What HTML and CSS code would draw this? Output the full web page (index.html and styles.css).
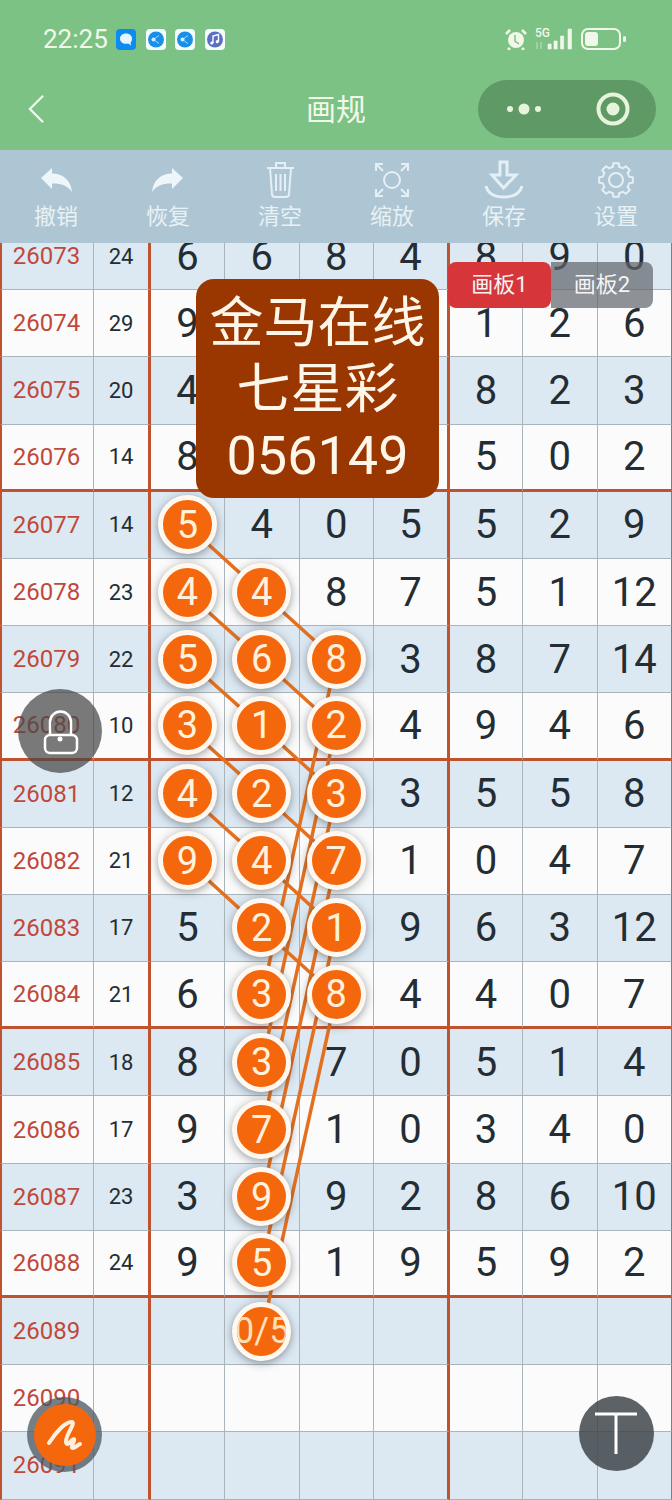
FILE: index.html
```html
<!DOCTYPE html>
<html lang="zh-CN">
<head>
  <meta charset="UTF-8">
  <meta name="viewport" content="width=device-width, initial-scale=1.0">
  <title>画规</title>
  <link rel="stylesheet" href="styles.css">
</head>
<body>
  <header class="top">
    <div class="status">
      <span class="time">22:25</span>
      <div class="notes">
        <svg viewBox="0 0 20 21"><rect width="20" height="21" rx="4" fill="#0a8cf0"/><path d="M10 4.5c-3.6 0-6 2.2-6 5.2 0 2.900 2.400 5 6 5 .8 0 1.500-.1 2.200-.3l2.800 2-.4-3c1-1 1.400-2.200 1.400-3.700 0-3-2.400-5.200-6-5.200z" fill="#e6f6ff"/></svg>
        <svg viewBox="0 0 20 21"><rect width="20" height="21" rx="4" fill="#f6fbff"/><circle cx="10" cy="10.500" r="8" fill="#1a8fe8"/><path d="M13 6.500 7.500 10.500l5.500 4" fill="none" stroke="#9fdcff" stroke-width="1"/><circle cx="7.500" cy="10.500" r="2" fill="#cdeeff"/></svg>
        <svg viewBox="0 0 20 21"><rect width="20" height="21" rx="4" fill="#f6fbff"/><circle cx="10" cy="10.500" r="8" fill="#1a8fe8"/><path d="M13 6.500 7.500 10.500l5.500 4" fill="none" stroke="#9fdcff" stroke-width="1"/><circle cx="7.500" cy="10.500" r="2" fill="#cdeeff"/></svg>
        <svg viewBox="0 0 20 21"><rect width="20" height="21" rx="4" fill="#f6fbff"/><circle cx="10" cy="10.500" r="8" fill="#5a6fc4"/><path d="M8 14V7l5.500-1.500v7" fill="none" stroke="#fff" stroke-width="1.400"/><circle cx="6.800" cy="14" r="1.600" fill="#fff"/><circle cx="12.300" cy="12.700" r="1.600" fill="#fff"/></svg>
      </div>
      <div class="sys">
        <svg class="alarm" viewBox="0 0 22 22"><circle cx="11" cy="12" r="8" fill="#f1f8ea"/><path d="M1 6 5 2M21 6l-4-4M5 20l-2 2M17 20l2 2" stroke="#f1f8ea" stroke-width="2.600"/><path d="M10 7v6l4 3" fill="none" stroke="#7cc284" stroke-width="1.500"/></svg>
        <span class="five-g">5G</span>
        <svg class="bars" viewBox="0 0 38 22"><path d="M2 14v7M6 14v7M13 16h3.200v5H13zM19 13h3.200v8H19zM25.500 8h3.200v13h-3.200zM33 1h3.500v20H33z" fill="#f1f8ea" stroke="#f1f8ea" stroke-width=".6"/></svg>
        <svg class="battery" viewBox="0 0 46 22"><rect x="1" y="1" width="38" height="20" rx="6" fill="none" stroke="#f1f8ea" stroke-width="2"/><rect x="4" y="4" width="13" height="14" rx="3" fill="#f1f8ea"/><rect x="42" y="8" width="3" height="6" rx="1.500" fill="#f1f8ea"/></svg>
      </div>
    </div>
    <nav class="nav">
      <svg class="back" viewBox="0 0 18 30"><path d="M16 1 2 15l14 14" fill="none" stroke="#f1f8ea" stroke-width="2.400"/></svg>
      <h1>画规</h1>
      <div class="capsule">
        <svg class="more" viewBox="0 0 36 12"><circle cx="4" cy="6" r="3" fill="#e8f3dc"/><circle cx="18" cy="6" r="5.500" fill="#e8f3dc"/><circle cx="32" cy="6" r="3" fill="#e8f3dc"/></svg>
        <svg class="target" viewBox="0 0 34 34"><circle cx="17" cy="17" r="14.500" fill="none" stroke="#e8f3dc" stroke-width="4"/><circle cx="17" cy="17" r="6.500" fill="#e8f3dc"/></svg>
      </div>
    </nav>
  </header>

  <div class="tools">
    <div class="tool">
      <svg viewBox="0 0 40 40"><path class="solid" d="M5 18 16 8v5.500c11 0 19 7 20 18.500-4-6-10-8.500-20-8.500V29z"/></svg>
      <span>撤销</span>
    </div>
    <div class="tool">
      <svg viewBox="0 0 40 40"><path class="solid" d="M35 18 24 8v5.500C13 13.500 5 20.500 4 32c4-6 10-8.500 20-8.500V29z"/></svg>
      <span>恢复</span>
    </div>
    <div class="tool">
      <svg viewBox="0 0 40 40"><path class="line" d="M7 8h27M16 8V3h9v5M10 8l2 26c0 1.500 1 3 3 3h11c2 0 3-1.500 3-3l2-26M16 14v17M20.500 14v17M25 14v17"/></svg>
      <span>清空</span>
    </div>
    <div class="tool">
      <svg viewBox="0 0 40 40"><circle class="line" cx="20" cy="20" r="8"/><path class="line" d="M4 11V4h7M5 5l6 6M36 11V4h-7M35 5l-6 6M4 29v7h7M5 35l6-6M36 29v7h-7M35 35l-6-6"/></svg>
      <span>缩放</span>
    </div>
    <div class="tool">
      <svg viewBox="0 0 40 40"><path class="line wide" d="M16 2h7v13h9L19.500 28 8 15h8zM2 26c2 8 8 11 18 11s16-3 18-11"/></svg>
      <span>保存</span>
    </div>
    <div class="tool">
      <svg viewBox="0 0 40 40">
        <g transform="translate(20 20)">
          <path id="tooth" class="line" d="M-5.200-12.500-3.300-13.100-2.700-16.800H2.700L3.300-13.100 5.200-12.500"/>
          <use href="#tooth" transform="rotate(45)"/>
          <use href="#tooth" transform="rotate(90)"/>
          <use href="#tooth" transform="rotate(135)"/>
          <use href="#tooth" transform="rotate(180)"/>
          <use href="#tooth" transform="rotate(225)"/>
          <use href="#tooth" transform="rotate(270)"/>
          <use href="#tooth" transform="rotate(315)"/>
          <circle class="line" r="7"/>
        </g>
      </svg>
      <span>设置</span>
    </div>
  </div>

  <main class="board">
    <div class="sheet">
      <div class="row"><div class="no">26073</div><div class="sum">24</div><div>6</div><div>6</div><div>8</div><div>4</div><div>8</div><div>9</div><div>0</div></div>
      <div class="row"><div class="no">26074</div><div class="sum">29</div><div>9</div><div></div><div></div><div></div><div>1</div><div>2</div><div>6</div></div>
      <div class="row"><div class="no">26075</div><div class="sum">20</div><div>4</div><div></div><div></div><div></div><div>8</div><div>2</div><div>3</div></div>
      <div class="row end"><div class="no">26076</div><div class="sum">14</div><div>8</div><div></div><div></div><div></div><div>5</div><div>0</div><div>2</div></div>
      <div class="row"><div class="no">26077</div><div class="sum">14</div><div><span class="ball">5</span></div><div>4</div><div>0</div><div>5</div><div>5</div><div>2</div><div>9</div></div>
      <div class="row"><div class="no">26078</div><div class="sum">23</div><div><span class="ball">4</span></div><div><span class="ball">4</span></div><div>8</div><div>7</div><div>5</div><div>1</div><div>12</div></div>
      <div class="row"><div class="no">26079</div><div class="sum">22</div><div><span class="ball">5</span></div><div><span class="ball">6</span></div><div><span class="ball">8</span></div><div>3</div><div>8</div><div>7</div><div>14</div></div>
      <div class="row end"><div class="no">26080</div><div class="sum">10</div><div><span class="ball">3</span></div><div><span class="ball">1</span></div><div><span class="ball">2</span></div><div>4</div><div>9</div><div>4</div><div>6</div></div>
      <div class="row"><div class="no">26081</div><div class="sum">12</div><div><span class="ball">4</span></div><div><span class="ball">2</span></div><div><span class="ball">3</span></div><div>3</div><div>5</div><div>5</div><div>8</div></div>
      <div class="row"><div class="no">26082</div><div class="sum">21</div><div><span class="ball">9</span></div><div><span class="ball">4</span></div><div><span class="ball">7</span></div><div>1</div><div>0</div><div>4</div><div>7</div></div>
      <div class="row"><div class="no">26083</div><div class="sum">17</div><div>5</div><div><span class="ball">2</span></div><div><span class="ball">1</span></div><div>9</div><div>6</div><div>3</div><div>12</div></div>
      <div class="row end"><div class="no">26084</div><div class="sum">21</div><div>6</div><div><span class="ball">3</span></div><div><span class="ball">8</span></div><div>4</div><div>4</div><div>0</div><div>7</div></div>
      <div class="row"><div class="no">26085</div><div class="sum">18</div><div>8</div><div><span class="ball">3</span></div><div>7</div><div>0</div><div>5</div><div>1</div><div>4</div></div>
      <div class="row"><div class="no">26086</div><div class="sum">17</div><div>9</div><div><span class="ball">7</span></div><div>1</div><div>0</div><div>3</div><div>4</div><div>0</div></div>
      <div class="row"><div class="no">26087</div><div class="sum">23</div><div>3</div><div><span class="ball">9</span></div><div>9</div><div>2</div><div>8</div><div>6</div><div>10</div></div>
      <div class="row end"><div class="no">26088</div><div class="sum">24</div><div>9</div><div><span class="ball">5</span></div><div>1</div><div>9</div><div>5</div><div>9</div><div>2</div></div>
      <div class="row"><div class="no">26089</div><div class="sum"></div><div></div><div><span class="ball long">0/5</span></div><div></div><div></div><div></div><div></div><div></div></div>
      <div class="row"><div class="no">26090</div><div class="sum"></div><div></div><div></div><div></div><div></div><div></div><div></div><div></div></div>
      <div class="row"><div class="no">26091</div><div class="sum"></div><div></div><div></div><div></div><div></div><div></div><div></div><div></div></div>

      <!-- lines between the picked numbers -->
      <svg class="links" viewBox="0 0 672 1277">
        <path d="M187 302 262 370 336 437M187 370 262 437 336 504M187 437 262 504 336 571M187 504 262 571 336 638M187 571 262 638 336 706M187 638 262 706 336 773"/>
        <path d="M336 437 262 773M336 504 262 840M336 571 262 907M336 638 262 974M336 706 262 1041M336 773 262 1109"/>
      </svg>
    </div>

    <div class="card">
      <div>金马在线</div>
      <div>七星彩</div>
      <div>056149</div>
    </div>

    <div class="tabs">
      <span class="tab on">画板1</span>
      <span class="tab">画板2</span>
    </div>

    <div class="fab lock">
      <svg viewBox="0 0 84 84"><path d="M32 46V33a10.500 10.500 0 0 1 21 0v13" fill="none" stroke="#fff" stroke-width="2.500"/><rect x="27" y="46" width="32" height="18" rx="5" fill="none" stroke="#fff" stroke-width="2.500"/><circle cx="42" cy="50" r="2.500" fill="#fff"/></svg>
    </div>
    <div class="fab pen">
      <svg viewBox="0 0 62 62"><path d="M15 39C22 28 32 17 38 18 42 19 31 32 32 38 33 44 38 34 40 35 42 36 35 44 39 44 42 44 43 41 46 40" fill="none" stroke="#fdeedd" stroke-width="4" stroke-linecap="round"/></svg>
    </div>
    <div class="fab text">
      <svg viewBox="0 0 75 75"><path d="M16 18H58M37 18V58" fill="none" stroke="#fff" stroke-width="3"/></svg>
    </div>
  </main>
</body>
</html>
```

FILE: styles.css
```css
* {
  box-sizing: border-box;
}
body {
  margin: 0;
  height: 1500px;
  overflow: hidden;
  background: #f6f7f7;
  font-family: Roboto, "Noto Sans CJK SC", sans-serif;
}
svg {
  display: block;
}

/* green header */
.top {
  height: 150px;
  background: #7cc284;
  color: #f1f8ea;
}
.status {
  height: 80px;
  display: flex;
  align-items: center;
  padding: 0 45px 2px 43px;
}
.time {
  font-size: 26px;
  width: 73px;
}
.notes {
  display: flex;
  gap: 9.500px;
}
.notes svg {
  width: 20px;
  height: 21px;
}
.sys {
  margin-left: auto;
  display: flex;
  align-items: center;
}
.alarm {
  width: 22px;
  height: 22px;
}
.five-g {
  font-size: 12px;
  font-weight: 500;
  width: 14px;
  margin: -12px 0 0 8px;
}
.bars {
  width: 38px;
  height: 22px;
  margin-left: -14px;
}
.battery {
  width: 46px;
  height: 22px;
  margin-left: 8px;
}
.nav {
  height: 58px;
  display: flex;
  align-items: center;
  position: relative;
  padding: 0 16px 0 28px;
}
.back {
  width: 17px;
  height: 30px;
}
.nav h1 {
  position: absolute;
  left: 0;
  right: 0;
  margin: 0 0 4px;
  text-align: center;
  font-size: 30px;
  font-weight: 400;
}
.capsule {
  margin-left: auto;
  width: 178px;
  height: 58px;
  border-radius: 29px;
  background: #5f9a66;
  display: flex;
  align-items: center;
  padding-left: 28px;
}
.more {
  width: 36px;
  height: 12px;
}
.target {
  width: 34px;
  height: 34px;
  margin-left: 54px;
}

/* toolbar */
.tools {
  height: 93px;
  background: #aec6d4;
  display: grid;
  grid-template-columns: repeat(6, 1fr);
}
.tool {
  display: flex;
  flex-direction: column;
  align-items: center;
  padding-top: 10px;
  color: #e8f1f4;
  font-size: 22px;
  line-height: 30px;
}
.tool svg {
  width: 40px;
  height: 40px;
  margin-bottom: 2px;
}
.solid {
  fill: #eef6f9;
}
.line {
  fill: none;
  stroke: #e4f0f5;
  stroke-width: 2;
}
.wide {
  stroke-width: 3;
}

/* number sheet */
.board {
  position: relative;
  height: 1257px;
  overflow: hidden;
}
.sheet {
  position: relative;
  margin-top: -20px;
}
.row {
  display: grid;
  grid-template-columns: 94px 57px 74px 74.500px 74.500px 76px 73px 74.500px 74.500px;
  height: 67.200px;
  background: #fbfbfb;
}
.row:nth-child(odd) {
  background: #dce8f2;
}
.row > div {
  display: flex;
  align-items: center;
  justify-content: center;
  border-right: 1px solid #aab4bb;
  border-bottom: 1px solid #aab4bb;
  font-size: 40px;
  color: #232d33;
}
.row.end > div {
  border-bottom: 3px solid #c0532f;
}
.row > .no {
  border-left: 2px solid #c0532f;
  padding-right: 2px;
  font-size: 24px;
  color: #c0483a;
}
.row > .sum {
  border-right: 3px solid #c0532f;
  font-size: 22px;
}
.row > div:nth-child(6) {
  border-right: 3px solid #c0532f;
}
.row > div:last-of-type {
  border-right-color: #b5685a;
}
.ball {
  position: relative;
  z-index: 2;
  flex: none;
  width: 59px;
  height: 59px;
  border: 5.500px solid #fff8f0;
  border-radius: 50%;
  background: #f4670c;
  box-shadow: 0 2px 8px rgba(50, 60, 70, 0.5);
  color: #fff1dc;
  font-size: 38px;
  white-space: nowrap;
  overflow: hidden;
  display: flex;
  align-items: center;
  justify-content: center;
}
.ball.long {
  font-size: 36px;
  color: #fde0ba;
}
.links {
  position: absolute;
  z-index: 1;
  left: 0;
  top: 0;
  width: 672px;
  height: 1277px;
  fill: none;
  stroke: #e4701f;
  stroke-width: 3.500;
}

/* things floating over the sheet */
.card {
  position: absolute;
  z-index: 3;
  left: 196px;
  top: 36px;
  width: 243px;
  height: 219px;
  padding-top: 12px;
  border-radius: 18px;
  background: #9a3700;
  color: #fff6ea;
  font-size: 54px;
  line-height: 66px;
  text-align: center;
}
.tabs {
  position: absolute;
  z-index: 3;
  left: 448px;
  top: 19px;
  display: flex;
}
.tab {
  width: 102px;
  height: 46px;
  border-radius: 0 8px 8px 0;
  background: rgba(95, 100, 105, 0.7);
  color: #f4f4f4;
  font-size: 22px;
  line-height: 46px;
  text-align: center;
}
.tab.on {
  width: 103px;
  border-radius: 8px;
  background: #d6363a;
}
.fab {
  position: absolute;
  z-index: 4;
  border-radius: 50%;
}
.lock {
  left: 18px;
  top: 446px;
  width: 84px;
  height: 84px;
  background: rgba(70, 70, 70, 0.72);
}
.pen {
  left: 27px;
  top: 1154px;
  width: 75px;
  height: 75px;
  padding: 6.500px;
  background: rgba(75, 85, 95, 0.75);
}
.pen svg {
  background: #f4670c;
  border-radius: 50%;
}
.text {
  left: 579px;
  top: 1153px;
  width: 75px;
  height: 75px;
  background: rgba(65, 70, 75, 0.85);
}
```
